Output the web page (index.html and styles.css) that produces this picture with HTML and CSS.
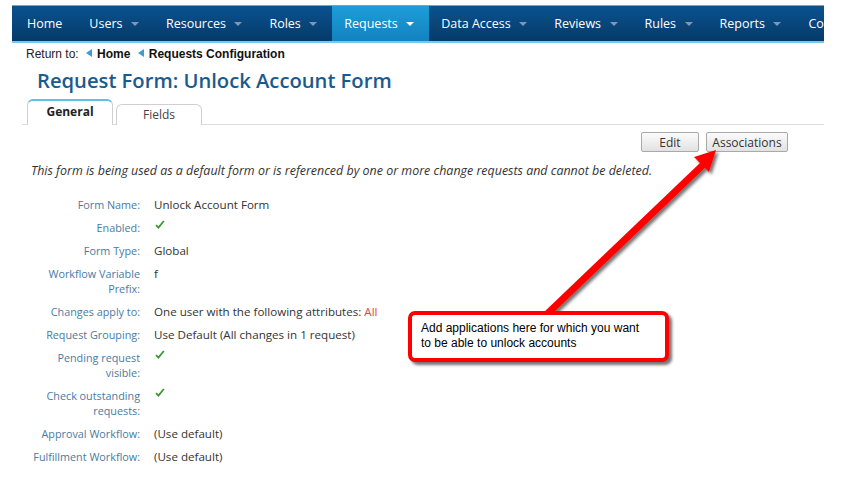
FILE: index.html
```html
<!DOCTYPE html>
<html>
<head>
<meta charset="utf-8">
<link rel="stylesheet" href="styles.css">
</head>
<body>
<div class="page">
  <nav class="nav">
    <div class="nav-item first">Home</div>
    <div class="nav-item">Users<span class="caret"></span></div>
    <div class="nav-item">Resources<span class="caret"></span></div>
    <div class="nav-item">Roles<span class="caret"></span></div>
    <div class="nav-item active">Requests<span class="caret"></span></div>
    <div class="nav-item">Data Access<span class="caret"></span></div>
    <div class="nav-item">Reviews<span class="caret"></span></div>
    <div class="nav-item">Rules<span class="caret"></span></div>
    <div class="nav-item">Reports<span class="caret"></span></div>
    <div class="nav-item last">Co</div>
  </nav>

  <div class="crumbs">
    <span>Return to:</span>
    <span class="back"></span><b>Home</b>
    <span class="back"></span><b>Requests Configuration</b>
  </div>

  <h1 class="title">Request Form: Unlock Account Form</h1>

  <div class="tabs">
    <div class="tab selected">General</div>
    <div class="tab">Fields</div>
  </div>

  <div class="toolbar">
    <button class="btn btn-edit">Edit</button>
    <button class="btn btn-assoc">Associations</button>
  </div>

  <p class="notice">This form is being used as a default form or is referenced by one or more change requests and cannot be deleted.</p>

  <table class="props">
    <tr><th>Form Name:</th><td>Unlock Account Form</td></tr>
    <tr><th>Enabled:</th><td><svg class="check" width="10" height="9" viewBox="0 0 10 9"><path d="M1 5.2 L3.4 7.6 L8.8 1" fill="none" stroke="#3c9a36" stroke-width="1.8"/></svg></td></tr>
    <tr><th>Form Type:</th><td>Global</td></tr>
    <tr><th>Workflow Variable Prefix:</th><td>f</td></tr>
    <tr><th>Changes apply to:</th><td>One user with the following attributes: <span class="red">All</span></td></tr>
    <tr><th>Request Grouping:</th><td>Use Default (All changes in 1 request)</td></tr>
    <tr><th>Pending request visible:</th><td><svg class="check" width="10" height="9" viewBox="0 0 10 9"><path d="M1 5.2 L3.4 7.6 L8.8 1" fill="none" stroke="#3c9a36" stroke-width="1.8"/></svg></td></tr>
    <tr><th>Check outstanding requests:</th><td><svg class="check" width="10" height="9" viewBox="0 0 10 9"><path d="M1 5.2 L3.4 7.6 L8.8 1" fill="none" stroke="#3c9a36" stroke-width="1.8"/></svg></td></tr>
    <tr><th>Approval Workflow:</th><td>(Use default)</td></tr>
    <tr><th>Fulfillment Workflow:</th><td>(Use default)</td></tr>
  </table>
</div>

<svg class="arrow" width="843" height="494" viewBox="0 0 843 494">
  <defs>
    <filter id="sh" x="-20%" y="-20%" width="140%" height="140%">
      <feDropShadow dx="2.5" dy="2.5" stdDeviation="1.5" flood-color="#000" flood-opacity="0.55"/>
    </filter>
  </defs>
  <g filter="url(#sh)">
    <line x1="547" y1="314" x2="705" y2="163" stroke="#ff0000" stroke-width="7"/>
    <polygon points="716,150 709,172 694,157" fill="#ff0000"/>
  </g>
</svg>

<div class="callout">Add applications here for which you want to be able to unlock accounts</div>
</body>
</html>
```

FILE: styles.css
```css
html, body {
  margin: 0;
  padding: 0;
  background: #fff;
}
body {
  font-family: "Open Sans", "Liberation Sans", sans-serif;
  color: #333;
  position: relative;
  width: 843px;
  height: 494px;
  overflow: hidden;
}
.page {
  width: 812px;
  margin-left: 12px;
  padding-top: 5px;
}
.nav {
  display: flex;
  height: 35px;
  border-top: 1px solid #8d9cab;
  border-bottom: 2px solid #73cbeb;
  background: linear-gradient(#0a5290, #053a69);
  overflow: hidden;
  white-space: nowrap;
}
.nav-item {
  display: flex;
  align-items: center;
  padding: 0 15px 0 12px;
  color: #fff;
  font-size: 12.5px;
  flex: none;
}
.nav-item.first {
  padding-left: 15px;
}
.nav-item.last {
  padding-right: 0;
}
.nav-item.active {
  background: linear-gradient(#1d9ed8, #1282c0);
}
.caret {
  display: inline-block;
  width: 0;
  height: 0;
  margin-left: 8.5px;
  border-left: 4px solid transparent;
  border-right: 4px solid transparent;
  border-top: 4px solid #7e98b4;
}
.active .caret {
  border-top-color: #fff;
}
.crumbs {
  margin-top: 4px;
  padding-left: 14px;
  font-family: "Liberation Sans", Arial, sans-serif;
  font-size: 12px;
  line-height: 15px;
  color: #222;
}
.crumbs b {
  color: #111;
}
.back {
  display: inline-block;
  width: 0;
  height: 0;
  margin: 0 5px 1px 4px;
  border-top: 4px solid transparent;
  border-bottom: 4px solid transparent;
  border-right: 6px solid #3d9bd3;
}
.title {
  margin: 5px 0 0 0;
  padding-left: 25px;
  font-size: 20.2px;
  line-height: 26px;
  font-weight: 600;
  color: #1b5a8d;
}
.tabs {
  display: flex;
  align-items: flex-end;
  gap: 3px;
  margin: 6px 0 0 10px;
  padding-left: 5px;
  height: 25px;
  border-bottom: 1px solid #dcdcdc;
}
.tab {
  width: 84px;
  height: 19px;
  border: 1px solid #cfcfcf;
  border-bottom: none;
  border-radius: 6px 6px 0 0;
  text-align: center;
  font-size: 12px;
  line-height: 20px;
  color: #444;
  background: #fff;
  margin-bottom: -1px;
  padding-bottom: 1px;
}
.tab.selected {
  height: 23px;
  border-top: 2px solid #62bfe6;
  font-weight: 700;
  color: #222;
  line-height: 22px;
}
.toolbar {
  display: flex;
  justify-content: flex-end;
  gap: 7px;
  margin-top: 7px;
  padding-right: 36px;
}
.btn {
  height: 20px;
  padding: 0;
  border: 1px solid #a9a9a9;
  border-radius: 2px;
  background: linear-gradient(#fbfbfb, #e2e2e2);
  font-family: "Open Sans", sans-serif;
  font-size: 12px;
  color: #333;
}
.btn-edit { width: 58px; }
.btn-assoc { width: 82px; }
.notice {
  margin: 10px 0 0 0;
  padding-left: 19px;
  font-size: 12.45px;
  line-height: 17px;
  font-style: italic;
  color: #333;
}
.props {
  margin-top: 14px;
  margin-left: 21px;
  border-collapse: collapse;
  line-height: 15px;
}
.props th {
  width: 107px;
  min-width: 107px;
  padding: 4px 14px 4px 0;
  text-align: right;
  vertical-align: top;
  font-weight: normal;
  font-size: 10.8px;
  color: #4a7aa2;
}
.props td {
  padding: 4px 0;
  vertical-align: top;
  font-size: 11.6px;
  color: #333;
}
.check {
  display: block;
  margin: 0 0 0 1px;
}
.red {
  color: #e2463c;
}
.arrow {
  position: absolute;
  left: 0;
  top: 0;
  pointer-events: none;
}
.callout {
  position: absolute;
  left: 408px;
  top: 311px;
  width: 230px;
  height: 36px;
  padding: 6px 14px 1px 9px;
  border: 4px solid #ff0000;
  border-radius: 7px;
  background: #fff;
  box-shadow: 3px 3px 3px rgba(0, 0, 0, 0.55);
  font-family: "Liberation Sans", Arial, sans-serif;
  font-size: 12px;
  line-height: 15px;
  color: #000;
}
```
